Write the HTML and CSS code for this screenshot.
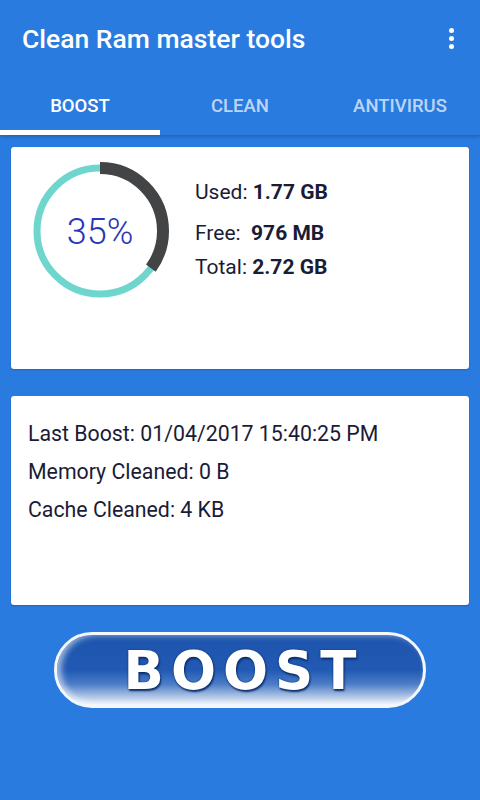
FILE: index.html
```html
<!DOCTYPE html>
<html lang="en">
<head>
  <meta charset="UTF-8" />
  <title>Clean Ram master tools</title>
  <link rel="stylesheet" href="styles.css">
</head>
<body>
  <header class="app-bar">
    <div class="toolbar">
      <h1>Clean Ram master tools</h1>
      <span class="menu-dots"><i></i><i></i><i></i></span>
    </div>
    <nav class="tabs">
      <a class="tab active">BOOST</a>
      <a class="tab">CLEAN</a>
      <a class="tab">ANTIVIRUS</a>
    </nav>
  </header>

  <main class="content">
    <section class="card ram-card">
      <svg class="ring" width="138" height="138" viewBox="0 0 138 138">
        <circle cx="69" cy="69" r="63" fill="none" stroke="#6fd6cd" stroke-width="7" />
        <!-- 35% used, starts at 12 o'clock -->
        <circle cx="69" cy="69" r="63" fill="none" stroke="#424446" stroke-width="12"
                stroke-dasharray="138.5 395.8" transform="rotate(-90 69 69)" />
        <text x="69" y="82" text-anchor="middle" class="ring-label">35%</text>
      </svg>
      <div class="stats">
        <p class="used">Used: <b>1.77 GB</b></p>
        <p class="free">Free:&nbsp;&nbsp;<b>976 MB</b></p>
        <p class="total">Total: <b>2.72 GB</b></p>
      </div>
    </section>

    <section class="card info-card">
      <p>Last Boost: 01/04/2017 15:40:25 PM</p>
      <p>Memory Cleaned: 0 B</p>
      <p>Cache Cleaned: 4 KB</p>
    </section>

    <button class="boost-btn">BOOST</button>
  </main>
</body>
</html>
```

FILE: styles.css
```css
body {
  margin: 0;
  background-color: #2a7bdf;
  font-family: Roboto, 'Noto Sans', sans-serif;
  width: 480px;
  height: 800px;
  overflow: hidden;
}

.app-bar {
  box-shadow: 0 2px 3px rgba(0,0,0,0.18);
}

.toolbar {
  height: 76px;
  display: flex;
  align-items: center;
  justify-content: space-between;
  padding: 0 26px 0 22px;
}

.toolbar h1 {
  margin: 0;
  color: #fff;
  font-size: 26.5px;
  font-weight: 500;
}

.menu-dots {
  display: flex;
  flex-direction: column;
  gap: 3px;
}

.menu-dots i {
  width: 5px;
  height: 5px;
  border-radius: 50%;
  background: #fff;
}

.tabs {
  display: flex;
  height: 59px;
}

.tab {
  flex: 1;
  display: flex;
  align-items: center;
  justify-content: center;
  color: rgba(255,255,255,0.7);
  font-size: 18.5px;
  font-weight: 500;
  border-bottom: 5px solid transparent;
  padding-top: 5px;
}

.tab.active {
  color: #fff;
  border-bottom-color: #fff;
}

.content {
  padding: 12px 11px 0;
}

.card {
  background: #fff;
  border-radius: 3px;
  box-shadow: 0 1px 2px rgba(0,0,0,0.2);
  color: #1a1c36;
}

.ram-card {
  height: 222px;
  box-sizing: border-box;
  display: flex;
  align-items: flex-start;
  padding: 15px 0 0 20px;
}

.ring-label {
  fill: #2a36b8;
  font-family: Roboto, sans-serif;
  font-size: 36px;
  font-weight: 300;
}

.stats {
  margin-left: 26px;
  padding-top: 16px;
  font-size: 21px;
}

.stats p {
  margin: 0;
  line-height: 28px;
}

.stats b {
  font-weight: 700;
}

.stats .free {
  margin-top: 13px;
}

.stats .total {
  margin-top: 6px;
}

.info-card {
  margin-top: 27px;
  height: 209px;
  box-sizing: border-box;
  padding: 24px 17px;
  font-size: 21.3px;
}

.info-card p {
  margin: 0 0 10px;
  line-height: 28px;
}

.boost-btn {
  display: block;
  margin: 27px auto 0;
  width: 372px;
  height: 76px;
  border-radius: 38px;
  border: 3px solid #f4f7fc;
  background: linear-gradient(#1d55ae 0%, #2159b3 50%, #4b7cc6 70%, #f2f5fb 100%);
  box-shadow: inset 4px 0 6px rgba(255,255,255,0.6);
  color: #fff;
  font-family: 'DejaVu Sans', sans-serif;
  font-weight: 700;
  font-size: 53px;
  letter-spacing: 7px;
  text-indent: 7px;
  line-height: 1;
  text-shadow: 0 0 2px #0d2f6b, 1px 2px 2px #0d2f6b;
  cursor: pointer;
  padding: 0;
}
```
